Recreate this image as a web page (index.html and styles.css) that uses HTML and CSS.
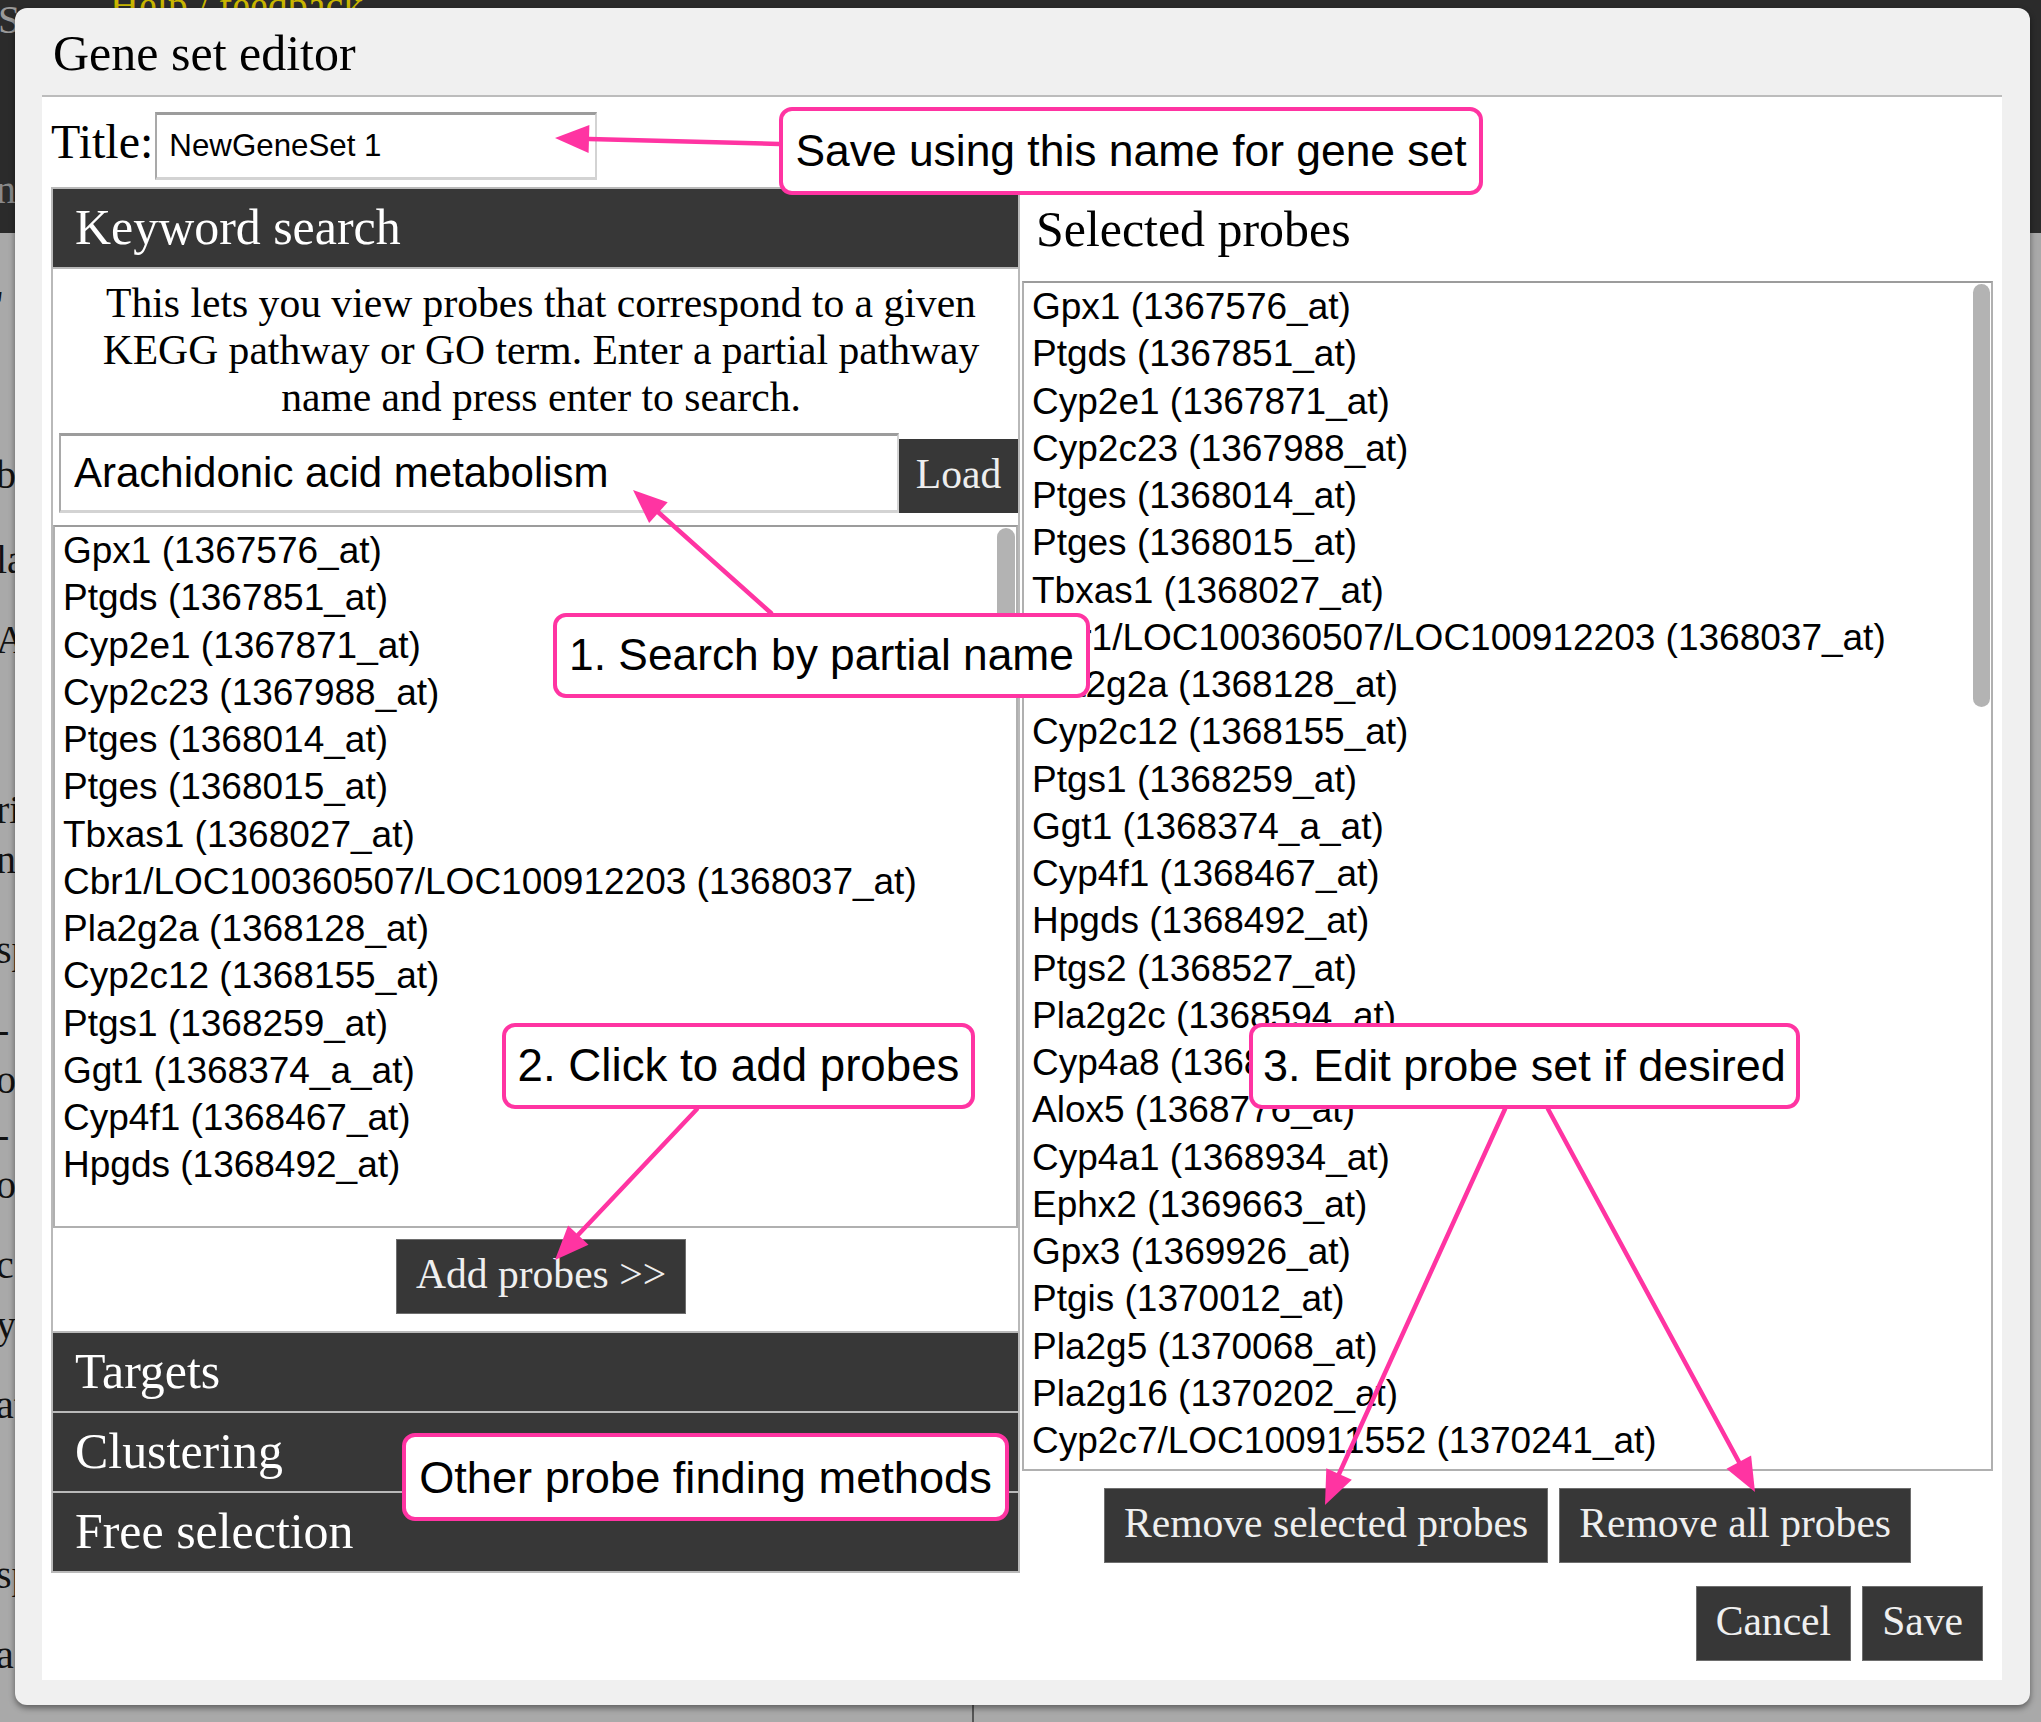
FILE: index.html
```html
<!DOCTYPE html>
<html lang="en">
<head>
<meta charset="utf-8">
<title>Gene set editor</title>
<link rel="stylesheet" href="styles.css">
</head>
<body>
<div class="page">
  <div class="page-header">
    <div class="page-brand">Se</div>
    <a class="page-help">Help / feedback</a>
    <div class="page-nav">n</div>
  </div>
  <div class="page-content">
    <p class="frag f1">'</p>
    <p class="frag f2">bo</p>
    <p class="frag f3">la</p>
    <p class="frag f4">A</p>
    <p class="frag f5">ri</p>
    <p class="frag f6">nl</p>
    <p class="frag f7">sp</p>
    <p class="frag f8">-</p>
    <p class="frag f9">o]</p>
    <p class="frag f10">-</p>
    <p class="frag f11">o]</p>
    <p class="frag f12">c</p>
    <p class="frag f13">y</p>
    <p class="frag f14">at</p>
    <p class="frag f15">sp</p>
    <p class="frag f16">a</p>
  </div>
  <div class="page-divider"></div>
</div>

<div class="dialog">
  <div class="dialog-title">Gene set editor</div>
  <div class="dialog-body">
    <div class="title-row">
      <label class="title-label">Title:</label>
      <div class="title-input">NewGeneSet 1</div>
    </div>

    <div class="columns">
      <div class="left-panel">
        <div class="acc-h">Keyword search</div>
        <div class="kw-body">
          <div class="desc">This lets you view probes that correspond to a given KEGG pathway or GO term. Enter a partial pathway name and press enter to search.</div>
          <div class="search-row">
            <div class="search-input">Arachidonic acid metabolism</div>
            <div class="load-btn">Load</div>
          </div>
          <div class="probe-list short">
            <div class="opt">Gpx1 (1367576_at)</div>
            <div class="opt">Ptgds (1367851_at)</div>
            <div class="opt">Cyp2e1 (1367871_at)</div>
            <div class="opt">Cyp2c23 (1367988_at)</div>
            <div class="opt">Ptges (1368014_at)</div>
            <div class="opt">Ptges (1368015_at)</div>
            <div class="opt">Tbxas1 (1368027_at)</div>
            <div class="opt">Cbr1/LOC100360507/LOC100912203 (1368037_at)</div>
            <div class="opt">Pla2g2a (1368128_at)</div>
            <div class="opt">Cyp2c12 (1368155_at)</div>
            <div class="opt">Ptgs1 (1368259_at)</div>
            <div class="opt">Ggt1 (1368374_a_at)</div>
            <div class="opt">Cyp4f1 (1368467_at)</div>
            <div class="opt">Hpgds (1368492_at)</div>
            <div class="thumb thumb-left"></div>
          </div>
          <div class="add-wrap"><span class="btn">Add probes &gt;&gt;</span></div>
        </div>
        <div class="acc-h">Targets</div>
        <div class="acc-h">Clustering</div>
        <div class="acc-h">Free selection</div>
      </div>

      <div class="right-panel">
        <div class="sel-h">Selected probes</div>
        <div class="probe-list tall">
          <div class="opt">Gpx1 (1367576_at)</div>
          <div class="opt">Ptgds (1367851_at)</div>
          <div class="opt">Cyp2e1 (1367871_at)</div>
          <div class="opt">Cyp2c23 (1367988_at)</div>
          <div class="opt">Ptges (1368014_at)</div>
          <div class="opt">Ptges (1368015_at)</div>
          <div class="opt">Tbxas1 (1368027_at)</div>
          <div class="opt">Cbr1/LOC100360507/LOC100912203 (1368037_at)</div>
          <div class="opt">Pla2g2a (1368128_at)</div>
          <div class="opt">Cyp2c12 (1368155_at)</div>
          <div class="opt">Ptgs1 (1368259_at)</div>
          <div class="opt">Ggt1 (1368374_a_at)</div>
          <div class="opt">Cyp4f1 (1368467_at)</div>
          <div class="opt">Hpgds (1368492_at)</div>
          <div class="opt">Ptgs2 (1368527_at)</div>
          <div class="opt">Pla2g2c (1368594_at)</div>
          <div class="opt">Cyp4a8 (1368613_at)</div>
          <div class="opt">Alox5 (1368776_at)</div>
          <div class="opt">Cyp4a1 (1368934_at)</div>
          <div class="opt">Ephx2 (1369663_at)</div>
          <div class="opt">Gpx3 (1369926_at)</div>
          <div class="opt">Ptgis (1370012_at)</div>
          <div class="opt">Pla2g5 (1370068_at)</div>
          <div class="opt">Pla2g16 (1370202_at)</div>
          <div class="opt">Cyp2c7/LOC100911552 (1370241_at)</div>
          <div class="thumb thumb-right"></div>
        </div>
        <div class="remove-row">
          <span class="btn">Remove selected probes</span>
          <span class="btn">Remove all probes</span>
        </div>
      </div>
    </div>

    <div class="footer">
      <span class="btn">Cancel</span>
      <span class="btn">Save</span>
    </div>
  </div>
</div>

<div class="overlay">
  <svg class="arrows" width="2041" height="1722" viewBox="0 0 2041 1722">
    <g stroke="#ff34a2" stroke-width="4.5" fill="none" stroke-linecap="round">
      <line x1="779" y1="144" x2="589" y2="139"/>
      <line x1="771" y1="613" x2="658" y2="512"/>
      <line x1="697" y1="1109" x2="578" y2="1235"/>
      <line x1="1505" y1="1109" x2="1339" y2="1474"/>
      <line x1="1548" y1="1109" x2="1739" y2="1462"/>
    </g>
    <g fill="#ff34a2">
      <polygon points="555,138 589.4,125 588.6,152.9"/>
      <polygon points="633,490 667.7,502.2 649.1,523.1"/>
      <polygon points="555,1260 588.5,1244.8 568.1,1225.6"/>
      <polygon points="1325,1505 1351.8,1479.8 1326.3,1468.3"/>
      <polygon points="1755,1492 1726.5,1468.8 1751.1,1455.4"/>
    </g>
  </svg>
  <div class="callout c0">Save using this name for gene set</div>
  <div class="callout c1">1. Search by partial name</div>
  <div class="callout c2">2. Click to add probes</div>
  <div class="callout c3">3. Edit probe set if desired</div>
  <div class="callout c4">Other probe finding methods</div>
</div>
</body>
</html>
```

FILE: styles.css
```css
* { box-sizing: border-box; }
html, body { margin: 0; padding: 0; }
body {
  width: 2041px;
  height: 1722px;
  overflow: hidden;
  position: relative;
  background: #a9a9a9;
  font-family: "Liberation Serif", "Times New Roman", serif;
}

/* ---------- backdrop page ---------- */
.page { width: 2041px; height: 1722px; position: relative; }
.page-header {
  height: 233px;
  background: #2b2b2b;
  position: relative;
  color: #8a8a8a;
  font-size: 40px;
}
.page-brand { line-height: 40px; margin-left: -2px; color: #9a9a9a; }
.page-help {
  position: absolute;
  left: 110px;
  top: -14px;
  color: #c9b600;
  font-size: 40px;
  line-height: 40px;
}
.page-nav { margin-top: 130px; line-height: 40px; color: #8a8a8a; margin-left: -4px; }
.page-content { color: #111; font-size: 40px; line-height: 40px; }
.page-divider {
  position: absolute;
  left: 972px;
  top: 1690px;
  width: 2px;
  height: 32px;
  background: #555;
}
.frag { margin: 0; height: 40px; margin-left: -4px; }
.f1 { margin-top: 52px; }
.f2 { margin-top: 130px; }
.f3 { margin-top: 45px; }
.f4 { margin-top: 40px; }
.f5 { margin-top: 130px; }
.f6 { margin-top: 10px; }
.f7 { margin-top: 50px; }
.f8 { margin-top: 40px; }
.f9 { margin-top: 10px; }
.f10 { margin-top: 15px; }
.f11 { margin-top: 10px; }
.f12 { margin-top: 40px; }
.f13 { margin-top: 20px; }
.f14 { margin-top: 40px; }
.f15 { margin-top: 130px; }
.f16 { margin-top: 40px; }

/* ---------- dialog ---------- */
.dialog {
  position: absolute;
  left: 15px;
  top: 8px;
  width: 2015px;
  height: 1697px;
  background: #f0f0f0;
  border-radius: 12px;
  box-shadow: 0 3px 6px rgba(0, 0, 0, 0.45);
}
.dialog-title {
  height: 87px;
  padding: 4px 0 0 38px;
  font-size: 50px;
  line-height: 83px;
  color: #000;
}
.dialog-body {
  margin: 0 28px 0 27px;
  background: #fff;
  border-top: 2px solid #bcbcbc;
  padding: 0 9px 19px;
}

.title-row {
  display: flex;
  align-items: flex-start;
  margin-top: 15px;
}
.title-label {
  font-size: 48px;
  line-height: 60px;
  color: #000;
}
.title-input {
  margin-left: 2px;
  width: 442px;
  height: 68px;
  border-top: 3px solid #9c9c9c;
  border-left: 2px solid #a9a9a9;
  border-right: 2px solid #d3d3d3;
  border-bottom: 3px solid #d3d3d3;
  padding-left: 12px;
  font-family: "Liberation Sans", Arial, sans-serif;
  font-size: 31.3px;
  line-height: 62px;
  color: #000;
}

.columns {
  display: grid;
  grid-template-columns: 969px 971px;
  column-gap: 2px;
  margin-top: 7px;
  align-items: start;
}

/* ---------- left accordion ---------- */
.left-panel { border: 2px solid #b9b9b9; }
.left-panel > * + * { border-top: 2px solid #b9b9b9; }
.acc-h {
  background: #373737;
  color: #fff;
  font-size: 49.92px;
  line-height: 56px;
  padding: 11px 0 11px 22px;
}
.kw-body { padding: 11px 0 17px; background: #fff; }
.desc {
  padding: 0 14px 0 25px;
  text-align: center;
  font-size: 41.6px;
  line-height: 47px;
  color: #000;
}
.search-row {
  display: flex;
  align-items: flex-end;
  margin-top: 12px;
  padding-left: 6px;
}
.search-input {
  flex: 0 0 840px;
  height: 80px;
  border-top: 3px solid #9c9c9c;
  border-left: 2px solid #a9a9a9;
  border-right: 2px solid #d3d3d3;
  border-bottom: 3px solid #d3d3d3;
  padding-left: 13px;
  font-family: "Liberation Sans", Arial, sans-serif;
  font-size: 42px;
  line-height: 73px;
  color: #000;
}
.load-btn {
  flex: 1;
  height: 74px;
  background: #373737;
  color: #eeeeee;
  font-size: 41.6px;
  line-height: 47px;
  padding-top: 12px;
  text-align: center;
}

.probe-list {
  position: relative;
  overflow: hidden;
  border: 2px solid #b0b0b0;
  border-top-color: #9c9c9c;
  padding: 0 0 0 8px;
  font-family: "Liberation Sans", Arial, sans-serif;
  font-size: 37px;
  line-height: 47.25px;
  color: #000;
  background: #fff;
  white-space: nowrap;
}
.probe-list.short { margin-top: 12px; height: 703px; }
.probe-list.tall { height: 1190px; }
.thumb {
  position: absolute;
  right: 1px;
  top: 1px;
  background: #b3b3b3;
  border-radius: 9px;
}
.thumb-left { width: 18px; height: 160px; }
.thumb-right { width: 17px; height: 423px; }

.add-wrap {
  margin-top: 11px;
  padding: 0 14px 0 25px;
  text-align: center;
  height: 75px;
}

.btn {
  display: inline-block;
  background: #373737;
  color: #efefef;
  border: 1px solid #6e6e6e;
  font-size: 41.6px;
  line-height: 47px;
  padding: 11px 19px 15px;
  white-space: nowrap;
}

/* ---------- right panel ---------- */
.sel-h {
  font-size: 49.92px;
  line-height: 56px;
  margin: 15px 0 23px;
  padding-left: 14px;
  color: #000;
}
.remove-row {
  display: flex;
  justify-content: center;
  gap: 11px;
  margin-top: 17px;
}

.footer {
  display: flex;
  justify-content: flex-end;
  gap: 11px;
  margin-top: 13px;
  padding-right: 10px;
}

/* ---------- annotation overlay ---------- */
.overlay {
  position: absolute;
  left: 0;
  top: 0;
  width: 2041px;
  height: 1722px;
  pointer-events: none;
}
.arrows { position: absolute; left: 0; top: 0; }
.callout {
  position: absolute;
  background: #fff;
  border: 4.5px solid #ff34a2;
  border-radius: 13px;
  font-family: "Liberation Sans", Arial, sans-serif;
  font-size: 45px;
  color: #000;
  text-align: center;
  white-space: nowrap;
}
.c0 { left: 779px; top: 107px; width: 704px; height: 88px; line-height: 76px; padding-top: 2px; font-size: 44.4px; }
.c1 { left: 553px; top: 613px; width: 537px; height: 85px; line-height: 74px; padding-top: 1px; font-size: 44.3px; }
.c2 { left: 502px; top: 1023px; width: 473px; height: 86px; line-height: 75px; padding-top: 1px; font-size: 45.7px; }
.c3 { left: 1249px; top: 1023px; width: 551px; height: 86px; line-height: 75px; padding-top: 1px; }
.c4 { left: 402px; top: 1433px; width: 607px; height: 88px; line-height: 76px; padding-top: 3px; font-size: 45.2px; }
```
